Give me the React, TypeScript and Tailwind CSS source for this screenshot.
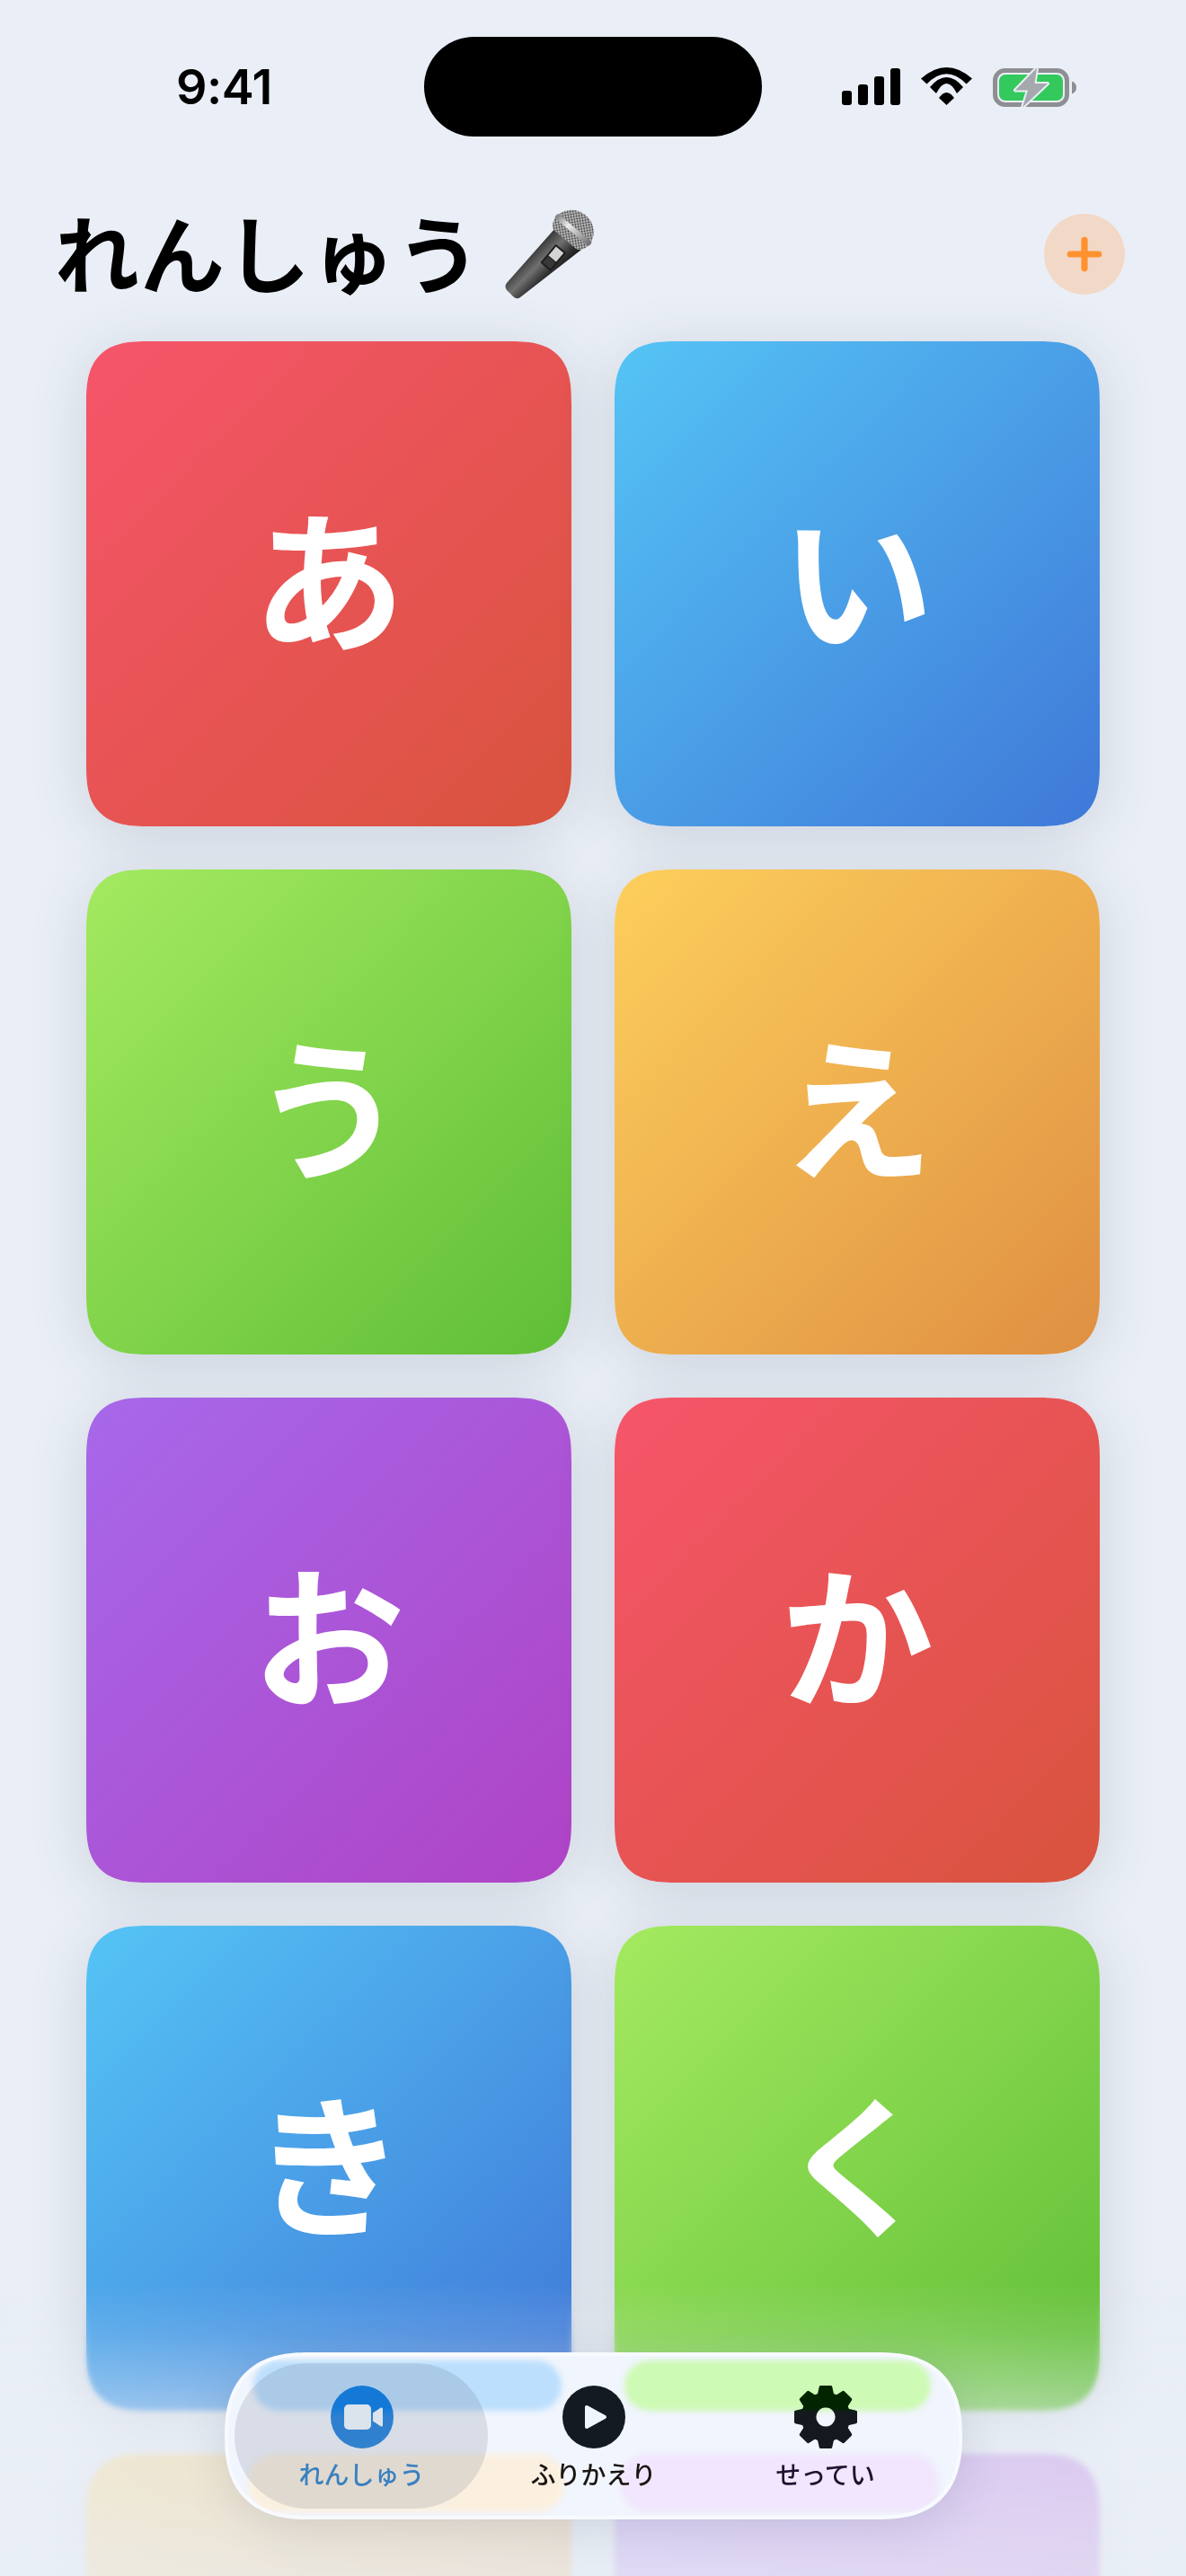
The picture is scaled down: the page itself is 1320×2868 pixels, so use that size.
import React from 'react';
import { Plus } from 'lucide-react';

const CJK = "font-['Noto_Sans_CJK_JP','Noto_Sans',sans-serif]";

// last two cards sit below the fold, their kana is never on screen
const cards = [
  { id: 'a', kana: 'あ', bg: 'bg-[linear-gradient(135deg,#f6556a,#d8533d)]' },
  { id: 'i', kana: 'い', bg: 'bg-[linear-gradient(135deg,#55c4f5,#3f78d8)]' },
  { id: 'u', kana: 'う', bg: 'bg-[linear-gradient(135deg,#a4ea60,#5fbe36)]' },
  { id: 'e', kana: 'え', bg: 'bg-[linear-gradient(135deg,#fdcf5c,#df8f42)]' },
  { id: 'o', kana: 'お', bg: 'bg-[linear-gradient(135deg,#a768ea,#af43c5)]' },
  { id: 'ka', kana: 'か', bg: 'bg-[linear-gradient(135deg,#f6556a,#d8533d)]' },
  { id: 'ki', kana: 'き', bg: 'bg-[linear-gradient(135deg,#55c4f5,#3f78d8)]' },
  { id: 'ku', kana: 'く', bg: 'bg-[linear-gradient(135deg,#a4ea60,#5fbe36)]' },
  { id: 'ke', kana: '', bg: 'bg-[linear-gradient(135deg,#fdcf5c,#df8f42)]' },
  { id: 'ko', kana: '', bg: 'bg-[linear-gradient(135deg,#a768ea,#af43c5)]' },
];

// 8 teeth cog, centre 36,36
const gearPath = (() => {
  const pts: string[] = [];
  for (let i = 0; i < 8; i++) {
    const a = (i * Math.PI) / 4 - Math.PI / 2;
    const step = [
      [-0.3, 26],
      [-0.17, 34],
      [0.17, 34],
      [0.3, 26],
    ];
    step.forEach(([da, r]) => {
      pts.push(`${(36 + r * Math.cos(a + da)).toFixed(2)} ${(36 + r * Math.sin(a + da)).toFixed(2)}`);
    });
  }
  return `M${pts.join('L')}Z M36 24a12 12 0 1 0 0.01 0Z`;
})();

const StatusIcons = () => (
  <div className="flex items-start mt-[34px] ml-[89px]">
    <svg width="65" height="41" viewBox="0 0 65 41" className="mt-[1px]">
      <rect x="0" y="25" width="11" height="16" rx="3" />
      <rect x="18" y="18" width="11" height="23" rx="3" />
      <rect x="36" y="9" width="11" height="32" rx="3" />
      <rect x="54" y="0" width="11" height="41" rx="3" />
    </svg>
    <svg width="57" height="42" viewBox="0 0 57 42" className="ml-[23px]">
      <path d="M0 12.5Q28.5 -12.5 57 12.5L50.5 18.5Q28.5 -3.9 6.5 18.5Z" />
      <path d="M10 22Q28.5 0 47 22L40 29Q28.5 7 17 29Z" />
      <path d="M20 34Q28.5 22 37 34L28.5 42Z" />
    </svg>
    <svg width="93" height="44" viewBox="0 -1 93 44" className="ml-[23px]">
      <rect x="2.5" y="2.5" width="80" height="38" rx="11" fill="none" stroke="#8e8e93" strokeWidth="5" />
      <rect x="7" y="7" width="71" height="29" rx="7" fill="#34c95c" />
      <path d="M88 14.5c3 1 5 3.500 5 7s-2 6-5 7Z" fill="#8e8e93" />
      <path
        d="M49 -0.5L25 24.500H39L33 43.500L61 17H46.500Z"
        fill="#a5a8ac"
        stroke="#eaeff7"
        strokeWidth="4"
        strokeLinejoin="round"
        paintOrder="stroke"
      />
    </svg>
  </div>
);

const MicEmoji = () => (
  <svg width="101" height="100" viewBox="0 0 101 100" className="ml-[26px] shrink-0">
    <defs>
      <linearGradient id="micBody" gradientUnits="userSpaceOnUse" x1="30" y1="40" x2="62" y2="72">
        <stop offset="0" stopColor="#242424" />
        <stop offset="0.45" stopColor="#707070" />
        <stop offset="0.75" stopColor="#333333" />
        <stop offset="1" stopColor="#141414" />
      </linearGradient>
      <linearGradient id="micCollar" x1="0" y1="0" x2="1" y2="0">
        <stop offset="0" stopColor="#7a7a7a" />
        <stop offset="0.35" stopColor="#eeeeee" />
        <stop offset="1" stopColor="#6a6a6a" />
      </linearGradient>
      <pattern id="micMesh" width="3" height="3" patternUnits="userSpaceOnUse" patternTransform="rotate(40)">
        <rect width="3" height="3" fill="#c8c8c8" />
        <circle cx="1.5" cy="1.5" r="1.1" fill="#2c2c2c" />
      </pattern>
    </defs>
    <path d="M56 21L85 45L17 98Q13 101 9 97L2 90Q-1 86 2 82Z" fill="url(#micBody)" />
    <g transform="rotate(40 76 23)">
      <path d="M52 24a24 22.500 0 0 1 48 0Z" fill="url(#micMesh)" />
      <path d="M52 24h48c0 7-4 12-7 13H59c-3-1-7-6-7-13Z" fill="url(#micMesh)" />
      <rect x="51" y="20" width="50" height="6" rx="2" fill="url(#micCollar)" />
    </g>
    <g transform="rotate(40 53 54)">
      <rect x="46" y="40" width="15" height="27" rx="1" fill="#1e1e1e" />
      <rect x="48" y="42" width="11" height="13" fill="#d4d4d4" />
      <rect x="48" y="56" width="11" height="9" fill="#383838" />
    </g>
  </svg>
);

const TabBar = () => (
  <div className="absolute left-[250px] top-[2619px] w-[821px] h-[186px] rounded-[93px] [corner-shape:superellipse(1.3)] bg-[#f1f5fd] border-[4px] border-[#f7faff] shadow-[0_10px_50px_rgba(40,50,80,0.13)] overflow-hidden">
    <div className="absolute left-[28px] top-[5px] w-[343px] h-[56px] rounded-[30px] bg-[#bcdffd] blur-[3px]" />
    <div className="absolute left-[441px] top-[5px] w-[341px] h-[56px] rounded-[30px] bg-[#cdfab4] blur-[3px]" />
    <div className="absolute left-[22px] top-[109px] w-[352px] h-[65px] rounded-[30px] bg-[#fbf0e0] blur-[3px]" />
    <div className="absolute left-[436px] top-[109px] w-[355px] h-[65px] rounded-[30px] bg-[#f1e6fd] blur-[3px]" />
    <div className="absolute left-[7px] top-[8px] w-[282px] h-[162px] rounded-[81px] bg-[#4a5a70]/15" />
    <div className="relative flex justify-center h-full pt-[33px]">
      <div className="w-[258px] flex flex-col items-center">
        <svg width="70" height="70" viewBox="0 0 70 70">
          <defs>
            <linearGradient id="tabBlue" x1="0" y1="0" x2="0" y2="1">
              <stop offset="0.35" stopColor="#1479d6" />
              <stop offset="0.5" stopColor="#2e80d0" />
              <stop offset="1" stopColor="#3082ce" />
            </linearGradient>
          </defs>
          <circle cx="35" cy="35" r="35" fill="url(#tabBlue)" />
          <rect x="15" y="21" width="30" height="28" rx="5" fill="#dbe3ec" />
          <path d="M47 30.500L56 24.500Q58 24 58 26V44Q58 46 56 45.500L47 39.500Z" fill="#dbe3ec" />
        </svg>
        <span className={`${CJK} text-[28px] leading-[40px] font-medium text-[#3a80c0] mt-[8px]`}>れんしゅう</span>
      </div>
      <div className="w-[258px] flex flex-col items-center">
        <svg width="70" height="70" viewBox="0 0 70 70">
          <circle cx="35" cy="35" r="35" fill="#141a22" />
          <path d="M27 24V46L47 35Z" fill="#f1f5fd" stroke="#f1f5fd" strokeWidth="4" strokeLinejoin="round" />
        </svg>
        <span className={`${CJK} text-[28px] leading-[40px] font-medium text-[#1a1512] mt-[8px]`}>ふりかえり</span>
      </div>
      <div className="w-[258px] flex flex-col items-center">
        <svg width="72" height="72" viewBox="0 0 72 72" className="-mt-[1px] -mb-[1px]">
          <defs>
            <linearGradient id="tabGear" gradientUnits="userSpaceOnUse" x1="0" y1="0" x2="0" y2="72">
              <stop offset="0.36" stopColor="#022500" />
              <stop offset="0.44" stopColor="#14191f" />
            </linearGradient>
          </defs>
          <path d={gearPath} fill="url(#tabGear)" fillRule="evenodd" stroke="url(#tabGear)" strokeWidth="3" strokeLinejoin="round" />
        </svg>
        <span className={`${CJK} text-[28px] leading-[40px] font-medium text-[#1d1230] mt-[8px]`}>せってい</span>
      </div>
    </div>
  </div>
);

export default function App() {
  return (
    <div className={`relative w-[1320px] h-[2868px] overflow-hidden bg-[#eaeff7] ${CJK}`}>
      {/* Status bar */}
      <div className="flex items-start h-[238px] pt-[41px] pl-[196px]">
        <div className="w-[276px] mt-[24px] font-['Inter',sans-serif] font-semibold tracking-[-0.5px] text-[54px] leading-[64px] text-black">9:41</div>
        <div className="w-[376px] h-[111px] rounded-full bg-black shrink-0" />
        <StatusIcons />
      </div>

      {/* Header */}
      <div className="flex items-center justify-between h-[90px] pl-[61px] pr-[68px]">
        <div className="flex items-center">
          <h1 className="text-[94px] leading-[100px] font-bold tracking-[1px] text-black -mt-[8px]">れんしゅう</h1>
          <MicEmoji />
        </div>
        <button className="w-[90px] h-[90px] rounded-full bg-[#f2d8c6] flex items-center justify-center">
          <Plus size={54} strokeWidth={3.2} color="#ff9230" />
        </button>
      </div>

      {/* Kana grid */}
      <div className="grid grid-cols-2 gap-[48px] pt-[52px] px-[96px]">
        {cards.map((card) => (
          <div
            key={card.id}
            className={`${card.bg} h-[540px] rounded-[70px] [corner-shape:superellipse(1.5)] pb-[22px] flex items-center justify-center shadow-[0_10px_64px_rgba(50,60,80,0.16)]`}
          >
            <span className="text-[170px] leading-none font-bold text-white">{card.kana}</span>
          </div>
        ))}
      </div>

      {/* Bottom fade under the tab bar */}
      <div className="absolute left-0 top-[2560px] w-full h-[308px] backdrop-blur-[3px] [mask-image:linear-gradient(to_bottom,transparent,black_35%)]" />
      <div className="absolute left-0 top-[2540px] w-full h-[328px] bg-[linear-gradient(to_bottom,rgba(234,239,247,0)_0%,rgba(234,239,247,0.15)_18%,rgba(234,239,247,0.5)_44%,rgba(234,239,247,0.76)_58%,rgba(234,239,247,0.85)_100%)]" />

      <TabBar />
    </div>
  );
}
